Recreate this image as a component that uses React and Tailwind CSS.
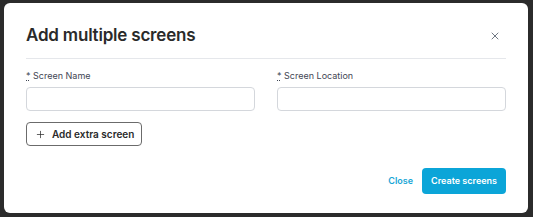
import { X, Plus } from "lucide-react";

function Field({ label }) {
  return (
    <div className="flex flex-col">
      <label className="text-[9px] text-[#3f4654] leading-[12px] mb-[5px]">
        <span className="underline decoration-dotted">*</span> {label}
      </label>
      <input className="h-[24px] rounded-[4px] border border-[#d4d7dc] bg-white outline-none" />
    </div>
  );
}

export default function App() {
  return (
    <div
      className="h-[217px] w-[533px] bg-[#2b2b2b] pt-[3px] pl-[4px]"
      style={{ fontFamily: "Inter, 'Liberation Sans', sans-serif" }}
    >
      <div className="w-[524px] h-[210px] bg-white rounded-[6px] px-[22px] pt-[21px] flex flex-col">
        <div className="flex items-center justify-between h-[24px]">
          <h2 className="text-[17px] font-semibold text-[#2a2a2a] tracking-[-0.2px]">
            Add multiple screens
          </h2>
          <X className="w-[12px] h-[12px] text-[#4b5563] mr-[5px]" strokeWidth={1.6} />
        </div>
        <div className="h-px bg-[#e5e7eb] mt-[10px]" />
        <div className="grid grid-cols-2 gap-[22px] mt-[11px]">
          <Field label="Screen Name" />
          <Field label="Screen Location" />
        </div>
        <div className="mt-[11px]">
          <button className="flex items-center gap-[6px] h-[24px] pl-[8px] pr-[7px] rounded-[4px] border border-[#6b6b6b] text-[10px] font-semibold text-[#2a2a2a]">
            <Plus className="w-[11px] h-[11px]" strokeWidth={1.6} />
            Add extra screen
          </button>
        </div>
        <div className="flex items-center justify-end mt-[22px] gap-[9px]">
          <button className="text-[9px] font-semibold text-[#1aa6d6]">Close</button>
          <button className="h-[26px] px-[9px] rounded-[4px] bg-[#0ba5d8] text-white text-[9px] font-semibold">
            Create screens
          </button>
        </div>
      </div>
    </div>
  );
}
